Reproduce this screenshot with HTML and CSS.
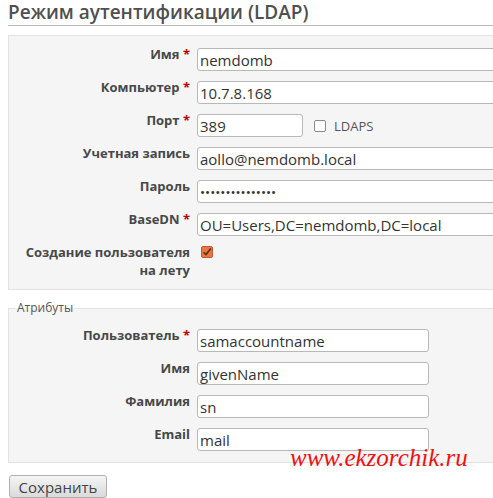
FILE: index.html
```html
<!DOCTYPE html>
<html lang="ru">
<head>
<meta charset="utf-8">
<title>Режим аутентификации (LDAP)</title>
<link rel="stylesheet" href="styles.css">
</head>
<body>
<div class="page">
  <h2 class="title">Режим аутентификации (LDAP)</h2>
  <div class="box main">
    <div class="row"><label>Имя <span class="req">*</span></label><input class="text wide" type="text" value="nemdomb"></div>
    <div class="row"><label>Компьютер <span class="req">*</span></label><input class="text wide" type="text" value="10.7.8.168"></div>
    <div class="row"><label>Порт <span class="req">*</span></label>
      <div class="inline"><input class="text port" type="text" value="389"><span class="cb"></span><span class="cb-label">LDAPS</span></div>
    </div>
    <div class="row"><label>Учетная запись</label><input class="text wide" type="text" value="aollo@nemdomb.local"></div>
    <div class="row"><label>Пароль</label><input class="text wide pass" type="password" value="aaaaaaaaaaaaaaa"></div>
    <div class="row"><label>BaseDN <span class="req">*</span></label><input class="text wide" type="text" value="OU=Users,DC=nemdomb,DC=local"></div>
    <div class="row"><label>Создание пользователя на лету</label>
      <span class="cb checked"><svg width="12" height="12" viewBox="0 0 12 12"><rect x="0.5" y="0.5" width="11" height="11" rx="1.5" fill="#ea7644" stroke="#c4592e"/><path d="M2.6 6.2 L5 8.6 L9.8 2.6" fill="none" stroke="#5b2c1c" stroke-width="1.6"/></svg></span>
    </div>
  </div>
  <fieldset class="box attrs">
    <legend>Атрибуты</legend>
    <div class="row"><label>Пользователь <span class="req">*</span></label><input class="text short" type="text" value="samaccountname"></div>
    <div class="row"><label>Имя</label><input class="text short" type="text" value="givenName"></div>
    <div class="row"><label>Фамилия</label><input class="text short" type="text" value="sn"></div>
    <div class="row"><label>Email</label><input class="text short" type="text" value="mail"></div>
  </fieldset>
  <button class="save" type="button">Сохранить</button>
  <div class="watermark">www.ekzorchik.ru</div>
</div>
</body>
</html>
```

FILE: styles.css
```css
html, body {
  margin: 0;
  padding: 0;
  overflow: hidden;
  background: #fff;
}
body {
  font-family: "Open Sans", "DejaVu Sans", sans-serif;
  color: #4a4a4a;
}
.page {
  position: relative;
  width: 560px;
  padding-left: 8px;
}
.title {
  margin: 0;
  font-size: 19px;
  font-weight: 600;
  line-height: 25px;
  color: #4f4f4f;
  border-bottom: 1px solid #bbb;
}
.box {
  background: #f5f5f5;
  border: 1px solid #e2e2e2;
}
.main {
  margin-top: 9px;
  padding: 12px 0 10px;
}
.row {
  display: grid;
  grid-template-columns: 181px 1fr;
  column-gap: 7px;
  align-items: start;
  margin-bottom: 10px;
}
.row:last-child {
  margin-bottom: 0;
}
.row label {
  font-size: 13px;
  font-weight: 700;
  line-height: 18px;
  margin-top: -3px;
  text-align: right;
  color: #484848;
}
.req {
  color: #bb0000;
}
.text {
  box-sizing: border-box;
  height: 23px;
  border: 1px solid #b8b8b8;
  border-radius: 3px;
  padding: 0 2px;
  font-family: "Open Sans", sans-serif;
  font-size: 15px;
  color: #333;
  background: #fff;
  outline: none;
}
.wide { width: 330px; }
.port { width: 106px; }
.short { width: 232px; }
.pass { font-size: 13.5px; }
.inline {
  display: flex;
  align-items: center;
}
.cb {
  display: block;
  width: 12px;
  height: 12px;
  box-sizing: border-box;
  border: 1px solid #8a8a8a;
  border-radius: 2px;
  background: #fff;
  margin-left: 11px;
}
.cb.checked {
  border: none;
  background: none;
  margin-left: 4px;
}
.cb.checked svg { display: block; }
.cb-label {
  margin-left: 8px;
  font-size: 13px;
  color: #555;
}
.attrs {
  margin: 11px 0 0;
  padding: 14px 0 11px;
  min-width: 0;
}
.attrs legend {
  margin-left: 6px;
  padding: 0 2px;
  font-size: 12px;
  line-height: 14px;
  color: #555;
}
.save {
  display: block;
  margin: 12px 0 0 1px;
  width: 98px;
  height: 23px;
  padding: 0;
  font-family: "Open Sans", sans-serif;
  font-size: 15px;
  color: #444;
  border: 1px solid #b0b0b0;
  border-radius: 3px;
  background: linear-gradient(#f5f5f5, #dadada);
}
.watermark {
  position: absolute;
  left: 290px;
  top: 445px;
  font-family: "Liberation Serif", serif;
  font-style: italic;
  font-size: 25px;
  line-height: 25px;
  color: #ee1111;
  white-space: nowrap;
}
```
